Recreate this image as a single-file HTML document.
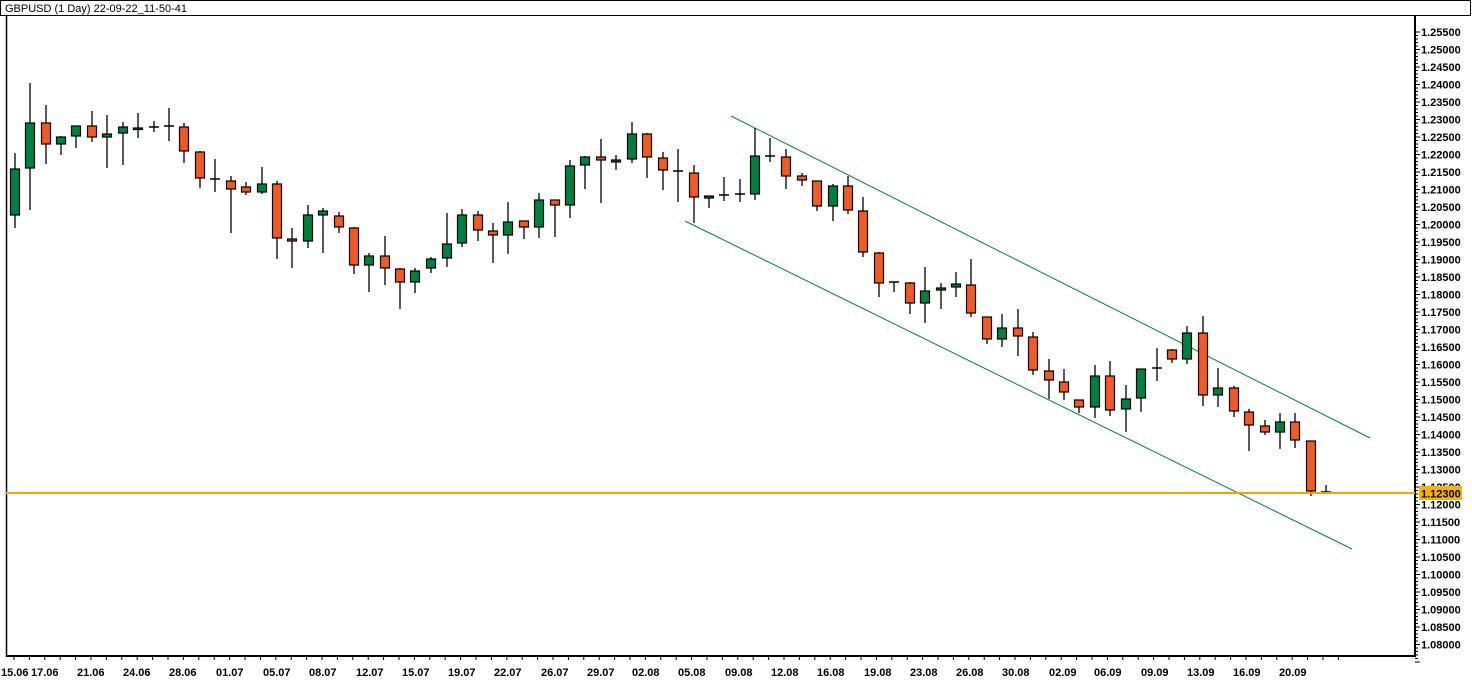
<!DOCTYPE html>
<html><head><meta charset="utf-8"><style>
body{margin:0;background:#fff;width:1472px;height:697px;overflow:hidden;font-family:"Liberation Sans",sans-serif}
svg{position:absolute;left:0;top:0}
</style></head><body>
<svg id="s" width="1472" height="697" xmlns="http://www.w3.org/2000/svg">
<rect x="0.5" y="0.5" width="1470" height="15" fill="#fff" stroke="#000"/>
<text x="5" y="12" font-size="11" font-family="Liberation Sans, sans-serif">GBPUSD (1 Day) 22-09-22_11-50-41</text>
<line x1="6.5" y1="16" x2="6.5" y2="657" stroke="#000" stroke-width="1.5"/>
<line x1="6" y1="656" x2="1416" y2="656" stroke="#000" stroke-width="2"/>
<line x1="1415" y1="16" x2="1415" y2="657" stroke="#000" stroke-width="2"/>
<line x1="731" y1="116" x2="1370" y2="438" stroke="#008040" stroke-width="1"/>
<line x1="685" y1="221" x2="1352" y2="549" stroke="#008040" stroke-width="1"/>
<g id="c"></g>
<line x1="6" y1="493" x2="1415" y2="493" stroke="#f0a500" stroke-width="2"/>
<g id="t"></g>
<g font-size="11" font-weight="bold" font-family="Liberation Sans, sans-serif" fill="#000">
<text x="1421" y="36">1.25500</text><text x="1421" y="53.5">1.25000</text><text x="1421" y="71">1.24500</text><text x="1421" y="88.5">1.24000</text><text x="1421" y="106">1.23500</text><text x="1421" y="123.5">1.23000</text><text x="1421" y="141">1.22500</text><text x="1421" y="158.5">1.22000</text><text x="1421" y="176">1.21500</text><text x="1421" y="193.5">1.21000</text><text x="1421" y="211">1.20500</text><text x="1421" y="228.5">1.20000</text><text x="1421" y="246">1.19500</text><text x="1421" y="263.5">1.19000</text><text x="1421" y="281">1.18500</text><text x="1421" y="298.5">1.18000</text><text x="1421" y="316">1.17500</text><text x="1421" y="333.5">1.17000</text><text x="1421" y="351">1.16500</text><text x="1421" y="368.5">1.16000</text><text x="1421" y="386">1.15500</text><text x="1421" y="403.5">1.15000</text><text x="1421" y="421">1.14500</text><text x="1421" y="438.5">1.14000</text><text x="1421" y="456">1.13500</text><text x="1421" y="473.5">1.13000</text><text x="1421" y="491">1.12500</text><text x="1421" y="508.5">1.12000</text><text x="1421" y="526">1.11500</text><text x="1421" y="543.5">1.11000</text><text x="1421" y="561">1.10500</text><text x="1421" y="578.5">1.10000</text><text x="1421" y="596">1.09500</text><text x="1421" y="613.5">1.09000</text><text x="1421" y="631">1.08500</text><text x="1421" y="648.5">1.08000</text>
<rect x="1419" y="486" width="43" height="14" fill="#f5b400"/>
<text x="1421" y="497.5">1.12300</text>
<text x="1" y="676">15.06</text><text x="31" y="676">17.06</text><text x="77" y="676">21.06</text><text x="123" y="676">24.06</text><text x="169" y="676">28.06</text><text x="216" y="676">01.07</text><text x="263" y="676">05.07</text><text x="309" y="676">08.07</text><text x="356" y="676">12.07</text><text x="402" y="676">15.07</text><text x="448" y="676">19.07</text><text x="494" y="676">22.07</text><text x="541" y="676">26.07</text><text x="587" y="676">29.07</text><text x="632" y="676">02.08</text><text x="678" y="676">05.08</text><text x="725" y="676">09.08</text><text x="771" y="676">12.08</text><text x="817" y="676">16.08</text><text x="864" y="676">19.08</text><text x="910" y="676">23.08</text><text x="956" y="676">26.08</text><text x="1002" y="676">30.08</text><text x="1049" y="676">02.09</text><text x="1094" y="676">06.09</text><text x="1141" y="676">09.09</text><text x="1187" y="676">13.09</text><text x="1233" y="676">16.09</text><text x="1279" y="676">20.09</text>
</g>
</svg>
<script>
var d=[[15,153,169,215,228,'g'],[30,83,123,168,210,'g'],[46,105,123,144,164,'r'],[61,136,137,144,155,'g'],[76,126,126,136,148,'g'],[92,111,126,137,142,'r'],[107,115,134,137,168,'g'],[123,122,127,133,165,'g'],[138,113,128,129.5,138,'g'],[154,121,127,127,132,'x'],[169,108,126,126,141,'x'],[184,123,127,151,163,'r'],[200,151,152,178,188,'r'],[215,159,179,179,192,'x'],[231,176,181,189,233,'r'],[246,182,187,192,195,'r'],[262,167,184,192,194,'g'],[277,181,184,238,259,'r'],[292,228,239,241,268,'r'],[308,205,215,241,248,'g'],[323,208,211,215,253,'g'],[339,212,216,227,233,'r'],[354,227,228,265,274,'r'],[369,253,256,265,292,'g'],[385,236,256,268,285,'r'],[400,268,269,282,309,'r'],[415,268,271,282,293,'g'],[431,257,259,268,273,'g'],[447,213,244,258,267,'g'],[462,209,215,243,247,'g'],[478,211,215,230,241,'r'],[493,223,231,235,263,'r'],[508,202,222,235,254,'g'],[524,221,221,227,239,'r'],[539,193,200,227,238,'g'],[555,200,200,205,237,'r'],[570,160,166,205,218,'g'],[585,156,157,165,189,'g'],[601,139,157,160,203,'r'],[616,155,160,162,170,'g'],[632,122,134,159,163,'g'],[647,133,134,157,178,'r'],[663,152,158,170,190,'r'],[678,149,171,171.5,202,'x'],[694,165,173,197,223,'r'],[709,196,196,198,208,'g'],[724,177,195,195,201,'x'],[740,179,194,194,202,'x'],[755,128,156,194,200,'g'],[770,138,156,156,162,'x'],[786,149,157,176,189,'r'],[802,173,176,180,186,'r'],[817,181,181,206,211,'r'],[833,184,186,206,221,'g'],[848,176,186,210,214,'r'],[863,197,211,252,257,'r'],[879,252,253,283,297,'r'],[894,282,282,282,292,'x'],[910,282,283,303,314,'r'],[925,267,291,303,323,'g'],[941,283,288,290,309,'g'],[956,272,284,287,297,'g'],[971,259,285,313,317,'r'],[987,317,317,339,344,'r'],[1002,314,328,339,347,'g'],[1018,309,328,336,356,'r'],[1033,332,337,370,375,'r'],[1049,359,371,380,399,'r'],[1064,369,382,392,400,'r'],[1079,400,400,407,413,'r'],[1095,365,376,407,418,'g'],[1110,361,376,410,416,'r'],[1126,385,399,409,432,'g'],[1141,369,369,398,412,'g'],[1157,348,368,368,381,'x'],[1172,349,350,359,363,'r'],[1187,326,333,359,364,'g'],[1203,316,333,395,406,'r'],[1218,368,388,395,407,'g'],[1234,386,388,411,417,'r'],[1249,409,412,425,451,'r'],[1265,420,426,432,435,'r'],[1280,413,422,432,449,'g'],[1295,413,422,440,448,'r'],[1311,441,441,491,496,'r'],[1326,485,492,492,493,'x']];
var s='';
d.forEach(function(c){var x=c[0];
s+='<line x1="'+x+'" y1="'+c[1]+'" x2="'+x+'" y2="'+c[4]+'" stroke="#000" stroke-width="1.3"/>';
if(c[5]=='x'){s+='<line x1="'+(x-5)+'" y1="'+c[2]+'" x2="'+(x+5)+'" y2="'+c[2]+'" stroke="#000" stroke-width="1.5"/>';}
else{var h=Math.max(c[3]-c[2],1.5);s+='<rect x="'+(x-4.5)+'" y="'+c[2]+'" width="9" height="'+h+'" fill="'+(c[5]=='g'?'#008040':'#f15a24')+'" stroke="#000" stroke-width="1.2"/>';}
});
document.getElementById('c').innerHTML=s;
var t='';
for(var i=0;i<=36;i++){var y=32+i*17.5;t+='<line x1="1415" y1="'+y+'" x2="1420" y2="'+y+'" stroke="#000"/>';
for(var k=1;k<5&&i<36;k++){var yy=y+k*3.5;t+='<line x1="1415" y1="'+yy+'" x2="1418" y2="'+yy+'" stroke="#000"/>';}}
for(var x=14;x<1340;x+=15.4){t+='<line x1="'+x+'" y1="656" x2="'+x+'" y2="660" stroke="#000"/>';}
document.getElementById('t').innerHTML=t;
</script>
</body></html>
